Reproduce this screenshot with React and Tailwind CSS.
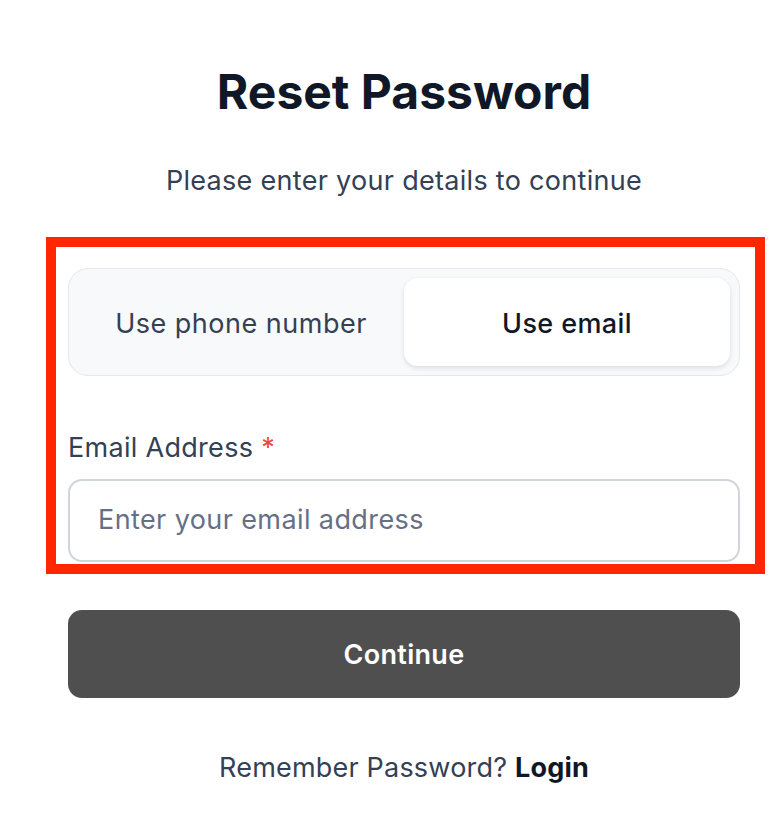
import React from 'react';

const App = () => {
  return (
    <div className="min-h-screen w-full bg-white font-['Inter','Liberation_Sans',sans-serif]">
      <div className="ml-[68px] w-[672px] flex flex-col pt-[62px]">
        {/* Header */}
        <h1 className="text-center text-[48px] leading-[60px] font-bold text-[#101828]">
          Reset Password
        </h1>
        <p className="mt-[41px] text-center text-[27px] leading-[36px] tracking-[0.3px] text-[#344054]">
          Please enter your details to continue
        </p>

        {/* Highlighted section */}
        <div className="mt-[38px] -ml-[22px] w-[719px] border-[10px] border-[#ff2600] pl-[12px] pr-[15px] pt-[21px] pb-[2px]">
          {/* Tab switch */}
          <div className="flex h-[108px] rounded-[20px] border border-[#e4e7ec] bg-[#f8f9fb] p-[9px]">
            <button className="flex-1 rounded-[14px] pt-[4px] text-[27px] tracking-[0.5px] text-[#344054]">
              Use phone number
            </button>
            <button className="flex-1 rounded-[14px] bg-white pt-[4px] text-[27px] font-medium tracking-[0.4px] text-[#101828] shadow-[0_2px_5px_rgba(16,24,40,0.12)]">
              Use email
            </button>
          </div>

          {/* Email field */}
          <label className="mt-[54px] block text-[27px] leading-[36px] tracking-[0.3px] text-[#344054]">
            Email Address <span className="text-[#f04438]">*</span>
          </label>
          <div className="mt-[13px] flex h-[83px] items-center rounded-[14px] border-2 border-[#d0d5dd] px-[28px]">
            <input
              type="email"
              placeholder="Enter your email address"
              className="w-full bg-transparent text-[27px] tracking-[0.4px] text-[#101828] outline-none placeholder:text-[#667085]"
            />
          </div>
        </div>

        {/* Submit */}
        <button className="mt-[36px] h-[88px] w-full rounded-[14px] bg-[#4f4f4f] pt-[3px] text-[27px] font-semibold tracking-[0.3px] text-white">
          Continue
        </button>

        <p className="mt-[52px] text-center text-[27px] leading-[36px] tracking-[0.2px] text-[#344054]">
          Remember Password? <span className="font-bold text-[#101828]">Login</span>
        </p>
      </div>
    </div>
  );
};

export default App;
